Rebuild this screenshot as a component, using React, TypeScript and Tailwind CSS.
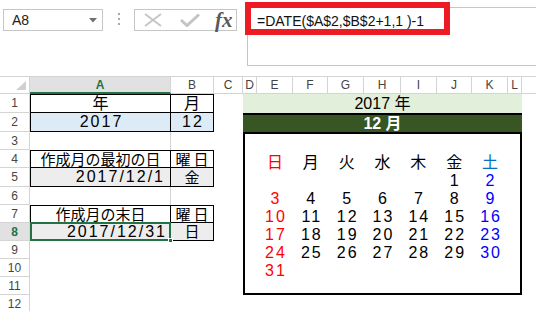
import React from "react"

const FONT = "font-['Liberation_Sans','Noto_Sans_CJK_JP',sans-serif] text-[16px] leading-none"
const CELL = `${FONT} text-black`
const JP = "font-['Liberation_Sans','Noto_Sans_CJK_JP',sans-serif] text-[15px] leading-none text-black"
const HDR = "font-['Liberation_Sans',sans-serif] text-[12px] text-[#444]"

const colLetters = ["A", "B", "C", "D", "E", "F", "G", "H", "I", "J", "K", "L", ""]
const colStart = [
  "col-start-2", "col-start-3", "col-start-4", "col-start-5", "col-start-6", "col-start-7", "col-start-8",
  "col-start-9", "col-start-10", "col-start-11", "col-start-12", "col-start-13", "col-start-14",
]
const rowStart = [
  "row-start-2", "row-start-3", "row-start-4", "row-start-5", "row-start-6", "row-start-7",
  "row-start-8", "row-start-9", "row-start-10", "row-start-11", "row-start-12", "row-start-13",
]

const week = ["日", "月", "火", "水", "木", "金", "土"]
const days: (number | null)[] = [null, null, null, null, null, ...Array.from({ length: 31 }, (_, i) => i + 1)]

function Toolbar() {
  return (
    <div className="relative flex h-[76px] shrink-0 items-start">
      <div className="ml-[3px] mt-[9px] flex h-[22px] w-[100px] shrink-0 items-center justify-between border border-[#C6C6C6] pl-[8px] pr-[5px]">
        <span className="font-['Liberation_Sans',sans-serif] text-[14px] leading-none text-[#222]">A8</span>
        <svg width="8" height="5" viewBox="0 0 8 5">
          <path d="M0 0h8L4 4.5z" fill="#707070" />
        </svg>
      </div>
      <div className="mt-[13px] flex w-[31px] shrink-0 flex-col items-center gap-[3px]">
        <div className="h-[2px] w-[2px] bg-[#A8A8A8]" />
        <div className="h-[2px] w-[2px] bg-[#A8A8A8]" />
        <div className="h-[2px] w-[2px] bg-[#A8A8A8]" />
      </div>
      <div className="mt-[9px] flex h-[22px] w-[103px] shrink-0 items-center border border-[#C6C6C6]">
        <svg className="ml-[9px]" width="18" height="14" viewBox="0 0 18 14">
          <path d="M1 1L17 13M17 1L1 13" stroke="#C4C4C4" strokeWidth="1.8" fill="none" />
        </svg>
        <svg className="ml-[18px]" width="20" height="14" viewBox="0 0 20 14">
          <path d="M1 7L7 12.5L19 1.5" stroke="#C4C4C4" strokeWidth="3" fill="none" />
        </svg>
        <span className="ml-[15px] font-['Liberation_Serif',serif] text-[21px] font-bold italic leading-none text-[#5A5A5A]">fx</span>
      </div>
      <div className="ml-[10px] mt-[7px] h-[59px] w-[320px] shrink-0 border border-[#C6C6C6] pl-[9px] pt-[5px]">
        <div className="font-['Liberation_Sans',sans-serif] text-[14px] leading-[16px] text-[#111]">
          =DATE($A$2,$B$2+1,1 )-1
        </div>
      </div>
      <div className="absolute left-[245px] top-[2px] h-[33px] w-[205px] border-[6px] border-[#ED1C24]" />
    </div>
  )
}

function dayColor(i: number) {
  if (i % 7 === 0) return "text-[#FF0000]"
  if (i % 7 === 6) return "text-[#0000FF]"
  return "text-black"
}

function Calendar() {
  return (
    <div className="col-span-9 col-start-5 row-span-9 row-start-4 border-2 border-black bg-white px-[12px] pt-[20px]">
      <div className="grid grid-cols-7 auto-rows-[18px]">
        {week.map((w, i) => (
          <div
            key={w}
            className={`flex items-center justify-center ${FONT} ${i === 0 ? "text-[#FF0000]" : i === 6 ? "text-[#0070C0]" : "text-black"}`}
          >
            {w}
          </div>
        ))}
        {days.map((d, i) => (
          <div key={i} className={`flex items-center justify-center pl-[2px] tracking-[2px] ${FONT} ${dayColor(i)}`}>
            {d}
          </div>
        ))}
      </div>
    </div>
  )
}

export default function App() {
  return (
    <div className="flex h-[311px] w-[536px] flex-col overflow-hidden bg-white">
      <Toolbar />
      <div className="grid grid-cols-[30px_141px_43px_29px_14px_36px_35px_36px_37px_36px_35px_36px_14px_14px] grid-rows-[18px_19px_19px_18px_18px_19px_18px_18px_18px_18px_18px_18px_18px]">
        {/* corner */}
        <div className="relative col-start-1 row-start-1 border-t border-r border-b border-[#D4D4D4]">
          <svg className="absolute bottom-[3px] right-[3px]" width="10" height="9" viewBox="0 0 10 9">
            <path d="M10 0V9H0z" fill="#D0D0D0" />
          </svg>
        </div>
        {/* column headers */}
        {colLetters.map((c, i) => (
          <div
            key={"h" + i}
            className={`${colStart[i]} row-start-1 flex items-center justify-center border-t border-r ${HDR} ${
              i === 0
                ? "border-b-2 border-t-[#D4D4D4] border-r-[#D4D4D4] border-b-[#217346] bg-[#E1E1E1] font-bold text-[#217346]"
                : "border-b border-[#D4D4D4]"
            } ${i === 12 ? "border-r-0" : ""}`}
          >
            {c}
          </div>
        ))}
        {/* row headers */}
        {Array.from({ length: 12 }, (_, i) => (
          <div
            key={"r" + i}
            className={`col-start-1 ${rowStart[i]} flex items-center justify-center border-r border-b border-[#D4D4D4] ${HDR} ${
              i === 7 ? "bg-[#E1E1E1] font-bold text-[#217346]" : ""
            }`}
          >
            {i + 1}
          </div>
        ))}

        {/* year / month */}
        <div className={`col-start-2 row-start-2 flex items-center justify-center border border-black ${CELL}`}>年</div>
        <div className={`col-start-3 row-start-2 flex items-center justify-center border-t border-r border-b border-black ${CELL}`}>月</div>
        <div className={`col-start-2 row-start-3 flex items-center justify-center border-l border-r border-b border-black bg-[#DDEBF7] pl-[2px] tracking-[2px] ${CELL}`}>2017</div>
        <div className={`col-start-3 row-start-3 flex items-center justify-center border-r border-b border-black bg-[#DDEBF7] pl-[2px] tracking-[2px] ${CELL}`}>12</div>
        <div className="col-start-2 row-start-4 border-r border-[#D4D4D4]" />

        {/* first day */}
        <div className={`col-start-2 row-start-5 flex items-center justify-center border border-black ${JP}`}>作成月の最初の日</div>
        <div className={`col-start-3 row-start-5 flex items-center justify-center border-t border-r border-b border-black pl-[3px] tracking-[3px] ${JP}`}>曜日</div>
        <div className={`col-start-2 row-start-6 flex items-center justify-end border-l border-r border-b border-black bg-[#EDEDED] pr-[5px] tracking-[2px] ${CELL}`}>2017/12/1</div>
        <div className={`col-start-3 row-start-6 flex items-center justify-center border-r border-b border-black bg-[#EDEDED] ${JP}`}>金</div>
        <div className="col-start-2 row-start-7 border-r border-[#D4D4D4]" />

        {/* last day */}
        <div className={`col-start-2 row-start-8 flex items-center justify-center border border-black ${JP}`}>作成月の末日</div>
        <div className={`col-start-3 row-start-8 flex items-center justify-center border-t border-r border-b border-black pl-[3px] tracking-[3px] ${JP}`}>曜日</div>
        <div className={`relative col-start-2 row-start-9 flex items-center justify-end border-l border-r border-b border-black bg-[#EDEDED] pr-[3px] tracking-[2px] ${CELL}`}>
          2017/12/31
          <div className="absolute -inset-[1px] border-2 border-[#217346]" />
          <div className="absolute -right-[3px] -bottom-[3px] h-[5px] w-[5px] border border-white bg-[#217346]" />
        </div>
        <div className={`col-start-3 row-start-9 flex items-center justify-center border-r border-b border-black bg-[#EDEDED] ${JP}`}>日</div>

        {/* calendar title */}
        <div className={`col-span-9 col-start-5 row-start-2 flex items-center justify-center bg-[#E2EFDA] ${CELL}`}>2017 年</div>
        <div className={`col-span-9 col-start-5 row-start-3 flex items-center justify-center border-t-2 border-black bg-[#375623] ${FONT} font-bold text-white`}>
          12 月
        </div>
        <Calendar />
      </div>
    </div>
  )
}
